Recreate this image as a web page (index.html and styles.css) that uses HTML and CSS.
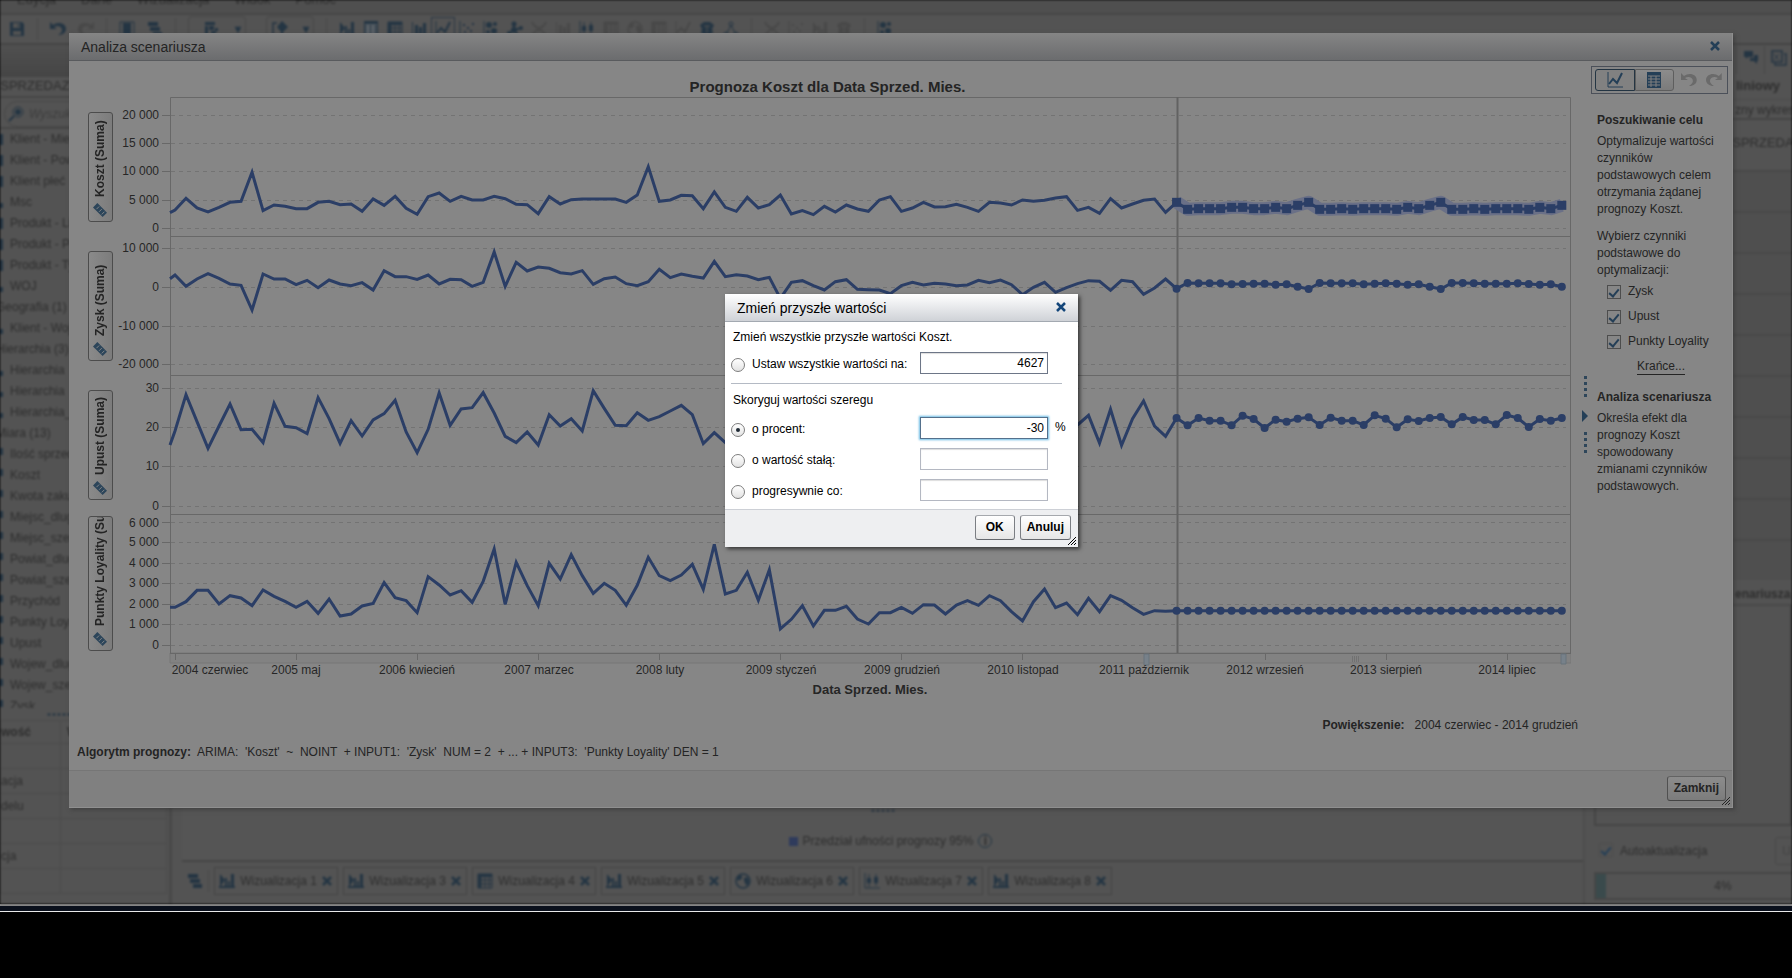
FILE: index.html
```html
<!DOCTYPE html>
<html lang="pl">
<head>
<meta charset="utf-8">
<title>Analiza scenariusza</title>
<link rel="stylesheet" href="styles.css">
</head>
<body>
<svg class="defs" aria-hidden="true">
  <defs>
    <symbol id="i-save" viewBox="0 0 16 16"><path d="M1 1h12l2 2v12H1z" fill="currentColor"/><path d="M4 2h7v5H4zM4 10h8v4H4z" fill="#525252"/><path d="M9 3h1v3H9z" fill="currentColor"/></symbol>
    <symbol id="i-undo" viewBox="0 0 16 14"><path d="M0 0v7h7L4 5c3-2 8-1 8 3 0 2-2 4-4 5h2c4-1 6-3 6-6 0-6-8-8-13-4z" fill="currentColor"/></symbol>
    <symbol id="i-redo" viewBox="0 0 16 14"><path d="M16 0v7H9l3-2C9 3 4 4 4 8c0 2 2 4 4 5H6C2 12 0 10 0 7 0 1 8-1 13 3z" fill="currentColor"/></symbol>
    <symbol id="i-stack" viewBox="0 0 16 16"><path d="M1 1h10v4H1zM3 6h10v4H3zM6 11h9v4H6z" fill="currentColor"/></symbol>
    <symbol id="i-page" viewBox="0 0 16 16"><path d="M1 1h14v15H1z" fill="none" stroke="currentColor"/><path d="M4 2h8v13H4z" fill="currentColor"/></symbol>
    <symbol id="i-auto" viewBox="0 0 16 16"><path d="M1 1l5 6-5 7zM6 5h2v10H6zM9 8h2v7H9zM12 1h3v14h-3z" fill="currentColor"/><path d="M0 14h16" stroke="currentColor" stroke-width="2"/></symbol>
    <symbol id="i-table" viewBox="0 0 16 16"><path d="M1 0h14v16H1z" fill="currentColor"/><path d="M2 4h12M2 7h12M2 10h12M2 13h12" stroke="#808080"/><path d="M5 4v11M10 4v11" stroke="#808080"/></symbol>
    <symbol id="i-cross" viewBox="0 0 16 16"><path d="M1 1h14v14H1zM1 3h14M4 2v13M8 3v12M12 3v12M1 7h14M1 11h14" fill="none" stroke="currentColor"/><path d="M1 1h14v3H1zM1 1h3v14H1z" fill="currentColor"/></symbol>
    <symbol id="i-bars" viewBox="0 0 16 16"><path d="M1 1h1v15H1zM4 4h3v11H4zM8 6h3v9H8zM12 2h3v13h-3z" fill="currentColor"/></symbol>
    <symbol id="i-line" viewBox="0 0 16 16"><path d="M1 0v15h15" fill="none" stroke="currentColor"/><path d="M2 12l4-5 4 4 5-10" fill="none" stroke="currentColor" stroke-width="2"/></symbol>
    <symbol id="i-scatter" viewBox="0 0 16 16"><path d="M1 0v15h15" fill="none" stroke="currentColor"/><path d="M4 3h2v2H4zM8 6h2v2H8zM13 2h2v2h-2zM5 10h2v2H5zM11 9h2v2h-2z" fill="currentColor"/></symbol>
    <symbol id="i-bubble" viewBox="0 0 16 16"><path d="M1 0v15h15" fill="none" stroke="currentColor"/><circle cx="6" cy="4" r="3" fill="currentColor"/><circle cx="12" cy="3" r="2" fill="currentColor"/><circle cx="11" cy="10" r="3" fill="currentColor"/><circle cx="5" cy="11" r="2" fill="currentColor"/></symbol>
    <symbol id="i-net" viewBox="0 0 16 16"><path d="M7 2v7M7 9l-5 4M7 9l7-2M7 9l4 5" stroke="currentColor" stroke-width="2"/><circle cx="7" cy="3" r="2.500" fill="currentColor"/><circle cx="7" cy="9" r="3" fill="currentColor"/><circle cx="2" cy="12" r="2" fill="currentColor"/><circle cx="14" cy="7" r="2" fill="currentColor"/></symbol>
    <symbol id="i-layout" viewBox="0 0 16 16"><path d="M2 1h10v3H2zM2 5h3v9H2zM6 5h5v4H6zM12 7h3v3h-3zM8 10h5v3H8z" fill="currentColor"/></symbol>
    <symbol id="i-insert" viewBox="0 0 16 16"><path d="M5 2H1v13h4" fill="none" stroke="currentColor" stroke-width="1.500"/><path d="M10 0l6 6-6 6-5-6z" fill="currentColor"/><path d="M9 10h2v5H9z" fill="currentColor"/></symbol>
    <symbol id="i-x" viewBox="0 0 16 16"><path d="M1 1c4 8 10 8 14 0M1 15c4-8 10-8 14 0" fill="none" stroke="currentColor" stroke-width="2"/></symbol>
    <symbol id="i-box" viewBox="0 0 16 16"><path d="M1 0v15h15" fill="none" stroke="currentColor"/><path d="M3 5h4v5H3zM10 4h4v6h-4z" fill="currentColor"/><path d="M5 1v13M12 1v12" stroke="currentColor"/></symbol>
    <symbol id="i-globe" viewBox="0 0 16 16"><circle cx="8" cy="8" r="7" fill="none" stroke="currentColor" stroke-width="1.500"/><path d="M3 3c3-2 5 0 4 2s-4 3-5 2zM9 5c3-2 5 0 5 3s-2 5-3 4-1-3-2-4z" fill="currentColor"/></symbol>
    <symbol id="i-shirt" viewBox="0 0 16 16"><path d="M1 4l4-3h6l4 3-2 4 1 4-6 4-6-4 1-4z" fill="currentColor"/><path d="M5 5h6M8 5v7" stroke="#525252"/></symbol>
    <symbol id="i-tree" viewBox="0 0 16 16"><path d="M8 4L3 14M8 4l5 10" stroke="currentColor"/><circle cx="8" cy="3" r="2" fill="none" stroke="currentColor"/><circle cx="3" cy="13" r="2" fill="none" stroke="currentColor"/><circle cx="13" cy="13" r="2" fill="none" stroke="currentColor"/></symbol>
    <symbol id="i-close" viewBox="0 0 10 10"><path d="M1 1l8 8M9 1L1 9" stroke="currentColor" stroke-width="2.500"/></symbol>
    <symbol id="i-ruler" viewBox="0 0 16 16"><path d="M5 0L0 5l11 11 5-5z" fill="currentColor"/><path d="M4 7l3-3M7 10l3-3M10 13l3-3" stroke="#8c8c8c"/></symbol>
    <symbol id="i-grip" viewBox="0 0 8 8"><path d="M0 8l8-8M3 8l5-5M6 8l2-2" stroke="currentColor"/></symbol>
    <symbol id="i-chat" viewBox="0 0 16 16"><path d="M1 1h9v6H5L3 9V7H1z" fill="currentColor"/><path d="M7 8h4V5h4v6h-1v3l-3-3H7z" fill="currentColor"/></symbol>
    <symbol id="i-copy" viewBox="0 0 16 16"><path d="M1 1h10v11H1zM13 4h2v11H4v-2" fill="none" stroke="currentColor" stroke-width="1.500"/><path d="M3 4l5 6M8 4l-5 6" stroke="currentColor"/></symbol>
    <symbol id="i-lens" viewBox="0 0 16 16"><circle cx="10" cy="6" r="5" fill="none" stroke="currentColor"/><circle cx="10" cy="6" r="3" fill="currentColor"/><path d="M6 10l-5 5" stroke="currentColor" stroke-width="2"/></symbol>
  </defs>
</svg>

<div class="app">
  <nav class="menu"><span>Edycja</span><span>Dane</span><span>Wizualizacja</span><span>Widok</span><span>Pomoc</span></nav>
  <div class="tools">
    <svg class="ic"><use href="#i-save"/></svg><i class="sep"></i>
    <svg class="ic"><use href="#i-undo"/></svg><svg class="ic off"><use href="#i-redo"/></svg><i class="sep"></i>
    <svg class="ic"><use href="#i-page"/></svg><svg class="ic"><use href="#i-stack"/></svg><i class="sep"></i>
    <span class="split"><svg class="ic"><use href="#i-layout"/></svg><b>▾</b></span>
    <span class="split narrow"><svg class="ic"><use href="#i-insert"/></svg><b>▾</b></span><i class="sep"></i>
    <span class="gallery">
      <svg class="ic"><use href="#i-auto"/></svg><svg class="ic"><use href="#i-table"/></svg><svg class="ic"><use href="#i-cross"/></svg><svg class="ic"><use href="#i-bars"/></svg><svg class="ic on"><use href="#i-line"/></svg><svg class="ic"><use href="#i-scatter"/></svg><svg class="ic"><use href="#i-bubble"/></svg><svg class="ic"><use href="#i-net"/></svg><svg class="ic off"><use href="#i-x"/></svg><svg class="ic off"><use href="#i-bars"/></svg><svg class="ic"><use href="#i-box"/></svg><svg class="ic off"><use href="#i-cross"/></svg><svg class="ic off"><use href="#i-globe"/></svg><svg class="ic off"><use href="#i-cross"/></svg><svg class="ic off"><use href="#i-line"/></svg><svg class="ic"><use href="#i-shirt"/></svg><svg class="ic"><use href="#i-tree"/></svg>
    </span><i class="sep"></i>
    <span class="gallery"><svg class="ic off"><use href="#i-x"/></svg><svg class="ic off"><use href="#i-scatter"/></svg><svg class="ic off"><use href="#i-auto"/></svg><svg class="ic off"><use href="#i-shirt"/></svg></span><i class="sep"></i>
    <svg class="ic"><use href="#i-bubble"/></svg>
  </div>
  <div class="work">
    <aside class="left">
      <div class="band"></div>
      <div class="source">_SPRZEDAZ</div>
      <div class="find"><div class="findbox"><svg class="ic"><use href="#i-lens"/></svg>Wyszukaj</div></div>
      <ul class="items">
        <li class="cat">Klient - Miejsc.</li><li class="cat">Klient - Powiat</li><li class="cat">Klient płeć</li><li class="geo">Msc</li><li class="cat">Produkt - Linia</li><li class="cat">Produkt - Prod.</li><li class="cat">Produkt - Typ</li><li class="geo">WOJ</li><li class="head">Geografia (1)</li><li class="geo">Klient - Woj.</li><li class="head">Hierarchia (3)</li><li class="geo">Hierarchia</li><li class="geo">Hierarchia</li><li class="geo">Hierarchia_</li><li class="head">Miara (13)</li><li class="num">Ilość sprzed.</li><li class="num">Koszt</li><li class="num">Kwota zakupu</li><li class="num">Miejsc_dlug</li><li class="num">Miejsc_szer</li><li class="num">Powiat_dlug</li><li class="num">Powiat_szer</li><li class="num">Przychód</li><li class="num">Punkty Loyality</li><li class="num">Upust</li><li class="num">Wojew_dlug</li><li class="num">Wojew_szer</li><li class="num">Zysk</li>
      </ul>
      <div class="hdots"></div>
      <table class="props">
        <tr><th>wość</th><th>Wartość</th></tr>
        <tr><td></td><td></td></tr>
        <tr><td>acja</td><td></td></tr>
        <tr><td>delu</td><td></td></tr>
        <tr><td></td><td></td></tr>
        <tr><td>cja</td><td></td></tr>
        <tr><td></td><td></td></tr>
      </table>
    </aside>
    <main class="center">
      <div class="canvas">
        <div class="cdots"></div>
        <div class="legend"><i class="key"></i>Przedział ufności prognozy 95%<span class="info">i</span></div>
      </div>
      <div class="tabs">
        <svg class="ic"><use href="#i-stack"/></svg><i class="sep"></i>
        <button class="tab"><svg class="ic"><use href="#i-auto"/></svg>Wizualizacja 1<svg class="x"><use href="#i-close"/></svg></button>
        <button class="tab"><svg class="ic"><use href="#i-auto"/></svg>Wizualizacja 3<svg class="x"><use href="#i-close"/></svg></button>
        <button class="tab"><svg class="ic"><use href="#i-cross"/></svg>Wizualizacja 4<svg class="x"><use href="#i-close"/></svg></button>
        <button class="tab"><svg class="ic"><use href="#i-auto"/></svg>Wizualizacja 5<svg class="x"><use href="#i-close"/></svg></button>
        <button class="tab"><svg class="ic"><use href="#i-globe"/></svg>Wizualizacja 6<svg class="x"><use href="#i-close"/></svg></button>
        <button class="tab"><svg class="ic"><use href="#i-box"/></svg>Wizualizacja 7<svg class="x"><use href="#i-close"/></svg></button>
        <button class="tab"><svg class="ic"><use href="#i-auto"/></svg>Wizualizacja 8<svg class="x"><use href="#i-close"/></svg></button>
      </div>
    </main>
    <aside class="right">
      <div class="rtabs"><span></span><span><svg class="ic"><use href="#i-chat"/></svg></span><span><svg class="ic"><use href="#i-copy"/></svg></span></div>
      <div class="rtitle">liniowy</div>
      <div class="rsub">zny wykres</div>
      <div class="rsrc">_SPRZEDAZ</div>
      <div class="rrows"><i></i><i></i><i></i><i></i><i></i><i></i><i></i><i></i><i></i><i></i></div>
      <div class="rtitle low">enariusza</div>
      <div class="rbox"></div>
      <div class="auto"><label><input type="checkbox" class="check" checked>Autoaktualizacja</label><button class="ubtn">Uaktualnij</button></div>
      <div class="meter"><i class="fill"></i><span>4%</span></div>
    </aside>
  </div>
</div>
<div class="taskline"></div>

<section class="dialog" aria-label="Analiza scenariusza">
  <header class="dhead"><span>Analiza scenariusza</span><button class="closer" aria-label="Zamknij okno"><svg><use href="#i-close"/></svg></button></header>
  <div class="dbody">
    <div class="chartcol">
      <h1 class="title">Prognoza Koszt dla Data Sprzed. Mies.</h1>
      <div class="chart">
        <div class="roles">
          <div class="slot"><button class="role"><svg><use href="#i-ruler"/></svg>Koszt (Suma)</button></div>
          <div class="slot"><button class="role"><svg><use href="#i-ruler"/></svg>Zysk (Suma)</button></div>
          <div class="slot"><button class="role"><svg><use href="#i-ruler"/></svg>Upust (Suma)</button></div>
          <div class="slot"><button class="role tall"><svg><use href="#i-ruler"/></svg>Punkty Loyality (Su</button></div>
        </div>
        <svg class="plot" viewBox="0 0 1458 608">
          <g class="grid" id="grid"></g>
          <path class="strip" d="M57 556H1458V566H57Z"/>
          <path class="frame" d="M57.500 556V.5H1457.500V556M57 139.500H1458M57 278.500H1458M57 417.500H1458M57 556.500H1458"/>
          <path class="frame" id="ticks" d=""/>
          <path class="now" d="M1064.500 0V556"/>
          <g id="series"></g>
          <path class="handle" d="M1031 557h5v11h-5zM1448 557h5v10h-5z"/>
          <path class="ribs" d="M1239.500 559v6M1241.500 559v6M1243.500 559v6M1245.500 559v6"/>
          <g class="ylab">
            <text x="46" y="22">20 000</text><text x="46" y="50">15 000</text><text x="46" y="78">10 000</text><text x="46" y="107">5 000</text><text x="46" y="135">0</text>
            <text x="46" y="155">10 000</text><text x="46" y="194">0</text><text x="46" y="233">-10 000</text><text x="46" y="271">-20 000</text>
            <text x="46" y="295">30</text><text x="46" y="334">20</text><text x="46" y="373">10</text><text x="46" y="413">0</text>
            <text x="46" y="430">6 000</text><text x="46" y="449">5 000</text><text x="46" y="470">4 000</text><text x="46" y="490">3 000</text><text x="46" y="511">2 000</text><text x="46" y="531">1 000</text><text x="46" y="552">0</text>
          </g>
          <g class="xlab">
            <text x="97" y="577">2004 czerwiec</text><text x="183" y="577">2005 maj</text><text x="304" y="577">2006 kwiecień</text><text x="426" y="577">2007 marzec</text><text x="547" y="577">2008 luty</text><text x="668" y="577">2009 styczeń</text><text x="789" y="577">2009 grudzień</text><text x="910" y="577">2010 listopad</text><text x="1031" y="577">2011 październik</text><text x="1152" y="577">2012 wrzesień</text><text x="1273" y="577">2013 sierpień</text><text x="1394" y="577">2014 lipiec</text>
            <text class="axis" x="757" y="597">Data Sprzed. Mies.</text>
          </g>
        </svg>
      </div>
      <p class="zoomrange"><b>Powiększenie:</b><span>2004 czerwiec - 2014 grudzień</span></p>
      <p class="algo"><b>Algorytm prognozy:</b><span>ARIMA:  'Koszt'  ~  NOINT  + INPUT1:  'Zysk'  NUM = 2  + ... + INPUT3:  'Punkty Loyality' DEN = 1</span></p>
    </div>
    <div class="splitter"><i class="vdots"></i><i class="arrow"></i><i class="vdots"></i></div>
    <aside class="side">
      <div class="modes">
        <button class="mode active" aria-label="Wykres"><svg><use href="#i-line"/></svg></button><button class="mode" aria-label="Tabela"><svg><use href="#i-table"/></svg></button>
        <svg class="hist"><use href="#i-undo"/></svg><svg class="hist"><use href="#i-redo"/></svg>
      </div>
      <div class="sidetext">
        <h2>Poszukiwanie celu</h2>
        <p>Optymalizuje wartości czynników podstawowych celem otrzymania żądanej prognozy Koszt.</p>
        <p class="pick">Wybierz czynniki podstawowe do optymalizacji:</p>
        <div class="checks">
          <label><input type="checkbox" class="check" checked>Zysk</label>
          <label><input type="checkbox" class="check" checked>Upust</label>
          <label><input type="checkbox" class="check" checked>Punkty Loyality</label>
        </div>
        <a class="limits" href="#">Krańce...</a>
        <h2>Analiza scenariusza</h2>
        <p>Określa efekt dla prognozy Koszt spowodowany zmianami czynników podstawowych.</p>
      </div>
    </aside>
  </div>
  <footer class="dfoot"><button class="btn dim">Zamknij</button><svg class="grip"><use href="#i-grip"/></svg></footer>
</section>

<form class="modal" aria-label="Zmień przyszłe wartości">
  <header class="mhead"><span>Zmień przyszłe wartości</span><button type="button" class="closer" aria-label="Zamknij"><svg><use href="#i-close"/></svg></button></header>
  <div class="mbody">
    <p>Zmień wszystkie przyszłe wartości Koszt.</p>
    <div class="row"><input type="radio" name="m" id="m1"><label for="m1">Ustaw wszystkie wartości na:</label><input class="val set" type="text" value="4627" aria-label="Wartość"></div>
    <hr>
    <p>Skoryguj wartości szeregu</p>
    <div class="row"><input type="radio" name="m" id="m2" checked><label for="m2">o procent:</label><input class="val set current" type="text" value="-30" aria-label="Procent"><span class="unit">%</span></div>
    <div class="row"><input type="radio" name="m" id="m3"><label for="m3">o wartość stałą:</label><input class="val" type="text" aria-label="Wartość stała"></div>
    <div class="row"><input type="radio" name="m" id="m4"><label for="m4">progresywnie co:</label><input class="val" type="text" aria-label="Przyrost"></div>
  </div>
  <footer class="mfoot"><button type="button" class="btn">OK</button><button type="button" class="btn">Anuluj</button><svg class="grip"><use href="#i-grip"/></svg></footer>
</form>
<script src="chart.js"></script>
</body>
</html>
```
FILE: styles.css
```css
* { box-sizing: border-box; }
body { margin: 0; background: #000; color: #242424; font: 12px/17px "Liberation Sans", Arial, sans-serif; overflow: hidden; }
h1, h2, p, ul { margin: 0; padding: 0; }
button, input { font: inherit; color: inherit; margin: 0; }
button { padding: 0; }
.defs { position: absolute; width: 0; height: 0; }

/* application behind the dialogs */
.app { height: 904px; display: flex; flex-direction: column; background: #535353; color: #2e2e2e; filter: blur(1px); overflow: hidden; }
.menu { display: flex; gap: 25px; height: 15px; padding-left: 17px; line-height: 0; font-size: 13px; background: #4f4f4f; border-bottom: 2px solid #464646; overflow: hidden; }
.tools { display: flex; align-items: center; height: 30px; padding-left: 9px; gap: 12px; color: #243543; border-bottom: 2px solid #444; flex: none; }
.ic { width: 16px; height: 16px; flex: none; }
.off { color: #484848; }
.on { outline: 1px solid #2b3844; outline-offset: 3px; }
.sep { width: 1px; height: 22px; background: #494949; }
.split { display: flex; align-items: center; justify-content: space-between; width: 58px; height: 26px; padding: 0 4px 0 14px; border: 1px solid #484848; border-radius: 4px; }
.split.narrow { width: 48px; margin-left: 8px; padding-left: 5px; }
.gallery { display: flex; gap: 8px; }
.work { display: flex; flex: 1; min-height: 0; }
.left { width: 172px; border-right: 3px solid #484848; display: flex; flex-direction: column; overflow: hidden; white-space: nowrap; }
.band { height: 32px; background: linear-gradient(#505050, #454545); flex: none; }
.source { height: 19px; line-height: 18px; margin-left: -7px; font-size: 13px; }
.find { height: 33px; padding: 3px 4px; border-top: 2px solid #464646; border-bottom: 2px solid #464646; flex: none; }
.findbox { display: flex; align-items: center; gap: 5px; height: 26px; padding-left: 3px; border: 1px solid #474747; border-radius: 13px; font-style: italic; color: #3e3e3e; }
.findbox .ic { color: #243543; }
.items { list-style: none; height: 579px; overflow: hidden; flex: none; }
.items li { height: 21px; line-height: 21px; padding-left: 10px; background: linear-gradient(#243543, #243543) left 5px / 3px 11px no-repeat; }
.items .geo { background-size: 3px 5px; background-position: left 11px; }
.items .num { background-size: 3px 7px; background-position: left 4px; }
.items .head { background: none; padding-left: 0; text-indent: -4px; }
.hdots, .cdots { height: 12px; background: radial-gradient(circle, #2b3844 1px, transparent 2px) center / 5px 5px repeat-x; width: 24px; margin-left: 47px; flex: none; }
.props { border-collapse: collapse; width: 167px; table-layout: fixed; }
.props td, .props th { height: 25px; padding: 0; border: 1px solid #4b4b4b; text-align: left; }
.props th { height: 23px; }
.props th:first-child { width: 60px; }
.props th + th { padding-left: 6px; }
.center { flex: 1; padding-left: 10px; display: flex; flex-direction: column; }
.canvas { flex: 1; display: flex; flex-direction: column; justify-content: flex-end; align-items: center; background: #555; border-bottom: 2px solid #454545; }
.cdots { margin: 0 0 10px; }
.legend { display: flex; align-items: center; gap: 5px; height: 30px; margin: 0 0 4px 16px; }
.key { width: 9px; height: 9px; background: #2f3b5c; }
.info { width: 14px; height: 14px; line-height: 12px; border: 1px solid #243543; border-radius: 50%; text-align: center; font-weight: bold; }
.tabs { display: flex; align-items: center; gap: 5px; height: 42px; padding: 0 0 4px 5px; color: #2e2e2e; }
.tabs .ic, .tabs .x { color: #243543; }
.tab { display: flex; align-items: center; justify-content: space-between; width: 124px; height: 28px; padding: 0 5px 0 4px; background: none; border: 1px solid #454545; }
.x { width: 10px; height: 10px; }
.right { width: 209px; padding: 1px 0 4px 9px; display: flex; flex-direction: column; border-left: 2px solid #4d4d4d; white-space: nowrap; overflow: hidden; }
.rtabs { display: flex; justify-content: flex-end; height: 28px; color: #243543; }
.rtabs span { width: 28px; padding: 4px 6px; border-left: 1px solid #464646; }
.rtitle { height: 26px; line-height: 24px; padding-left: 142px; font-size: 13px; font-weight: bold; border-bottom: 1px solid #4a4a4a; }
.rsub { height: 20px; padding: 2px 0 0 141px; border-bottom: 2px solid #444; }
.rsrc { height: 50px; line-height: 46px; padding-left: 131px; font-size: 13px; }
.rrows { height: 410px; display: flex; flex-direction: column; background: #4f4f4f; }
.rrows i { flex: 1; border-top: 2px solid #484848; }
.rtitle.low { line-height: 28px; padding-left: 141px; font-size: 12px; border-bottom: 2px solid #484848; }
.rbox { flex: 1; border: 2px solid #454545; border-top: 0; }
.auto { display: flex; align-items: center; justify-content: space-between; height: 46px; padding: 4px 0 0 5px; margin-right: -50px; }
.auto label { display: flex; gap: 7px; }
.ubtn { height: 28px; width: 67px; background: none; border: 1px solid #484848; border-radius: 3px; color: #444; }
.meter { display: flex; justify-content: center; position: relative; height: 28px; line-height: 24px; border: 2px solid #464646; margin-right: -60px; }
.fill { position: absolute; left: 0; top: 0; bottom: 0; width: 4%; background: #3a4a4c; }
.taskline { height: 8px; border-top: 2px solid #8a8a8a; border-bottom: 1px solid #e8e8e8; background: #0a101c; }

/* scenario dialog */
.dialog { position: absolute; left: 69px; right: 59px; top: 33px; background: #868686; border: solid #8f8f8f; border-width: 0 1px 1px 0; box-shadow: 2px 2px 4px #3338; display: flex; flex-direction: column; }
.dhead, .mhead { display: flex; align-items: center; justify-content: space-between; height: 28px; padding: 1px 12px 0; font-size: 14px; }
.dhead { background: linear-gradient(#858585, #6b6c6e); border-bottom: 1px solid #595b5e; }
.closer { border: 0; background: none; color: #243f57; width: 10px; height: 10px; display: flex; margin-bottom: 3px; }
.closer svg { width: 10px; height: 10px; }
.dbody { display: flex; height: 709px; }
.chartcol { flex: 1; min-width: 0; padding-top: 16px; }
.title { font-size: 15px; line-height: 20px; text-align: center; padding-left: 6px; }
.chart { display: flex; padding: 0 9px 0 19px; }
.roles { width: 25px; flex: none; }
.slot { height: 139px; display: flex; align-items: center; }
.role { width: 25px; height: 110px; border: 1px solid #4c4c4c; border-radius: 3px; background: linear-gradient(90deg, #7c7c7c, #8a8a8a); writing-mode: vertical-rl; transform: rotate(180deg); font-weight: bold; font-size: 12px; display: flex; align-items: center; gap: 6px; padding: 4px 0; overflow: hidden; white-space: nowrap; }
.role.tall { height: 135px; }
.role svg { width: 14px; height: 14px; color: #2c455a; transform: rotate(180deg); flex: none; }
.plot { flex: 1; min-width: 0; align-self: flex-start; }
.grid path { stroke: #737373; stroke-dasharray: 4 4; fill: none; }
.grid .tick, .frame { stroke: #686868; stroke-dasharray: none; fill: none; }
.strip { fill: #828282; stroke: #777; }
.now { stroke: #626262; stroke-width: 2; }
.trend { fill: none; stroke: #2b3e66; stroke-width: 3; }
.ci { fill: none; stroke: #6a7087; stroke-width: 13; stroke-linejoin: round; }
.mark { fill: #2b3e66; }
.handle { fill: #77818a; stroke: #69727a; }
.ribs { stroke: #717171; }
.ylab text { text-anchor: end; }
.xlab text { text-anchor: middle; }
.plot text { fill: #262626; font-size: 12px; }
.plot .axis { font-size: 13px; font-weight: bold; }
.zoomrange { display: flex; justify-content: flex-end; gap: 10px; padding: 12px 2px 0 0; }
.algo { display: flex; gap: 6px; padding: 10px 0 0 8px; }
.algo span { white-space: pre; }
.splitter { width: 11px; display: flex; flex-direction: column; align-items: center; justify-content: center; gap: 10px; padding-right: 1px; }
.vdots { width: 3px; height: 24px; background: repeating-linear-gradient(#2e465a 0 3px, transparent 3px 6px); }
.arrow { border: solid transparent; border-width: 6px 0 6px 6px; border-left-color: #243f57; }
.side { width: 141px; padding: 5px 4px 0 0; }
.modes { display: flex; align-items: center; height: 28px; padding: 0 5px 0 3px; border: 1px solid #4b5059; }
.mode { width: 40px; height: 22px; border: 1px solid #5e5e5e; background: linear-gradient(#8c8c8c, #7b7b7b); color: #243f57; display: flex; align-items: center; justify-content: center; border-radius: 0 3px 3px 0; }
.mode svg { width: 16px; height: 16px; }
.mode.active { border-color: #243543; border-radius: 3px 0 0 3px; background: #818181; }
.hist { width: 16px; height: 14px; margin-left: 7px; color: #6a6a6a; }
.hist + .hist { margin-left: 9px; }
.sidetext { padding: 18px 2px 0 6px; }
.sidetext h2 { font-size: 12px; line-height: 17px; padding-bottom: 4px; }
.pick { padding: 10px 24px 0 0; }
.checks label { display: flex; align-items: center; gap: 7px; height: 25px; padding-left: 10px; }
.check { appearance: none; width: 14px; height: 14px; border: 1px solid #4d4d4d; background: #868686; display: grid; place-items: center; }
.check:checked::before { content: ""; width: 4px; height: 8px; border: solid #243f57; border-width: 0 2px 2px 0; transform: rotate(40deg); }
.auto .check { background: none; }
.limits { display: block; width: 48px; margin: 5px 0 14px 40px; color: inherit; line-height: 15px; border-bottom: 1px solid #242424; text-decoration: none; }
.dfoot, .mfoot { display: flex; align-items: center; justify-content: flex-end; gap: 5px; height: 38px; padding: 0 7px 2px; position: relative; }
.dfoot { background: #808080; border-top: 1px solid #767676; height: 37px; padding-right: 6px; }
.btn { height: 25px; padding: 0 6px; font-weight: bold; border: 1px solid #6b6f76; border-color: #a5a8ad #7b7e83 #66696e; border-radius: 3px; background: linear-gradient(#fff, #e6e6e6); }
.btn.dim { border-color: #636363 #505050 #444; background: linear-gradient(#8c8c8c, #7c7c7c); }
.grip { position: absolute; right: 2px; bottom: 2px; width: 8px; height: 8px; }

/* value dialog */
.modal { position: absolute; left: calc(50% - 171px); top: 294px; width: 353px; background: #fff; color: #000; box-shadow: 2px 2px 4px #0009; }
.mhead { background: linear-gradient(#fff, #cfd2d7); border-bottom: 1px solid #a3a9b1; }
.mhead .closer { color: #14467a; }
.mbody { padding: 7px 16px 8px 6px; }
.mbody p { padding-left: 2px; }
.row { display: flex; align-items: center; height: 22px; margin-bottom: 9px; }
.row > * { flex: none; }
.mbody p + .row { margin-top: 6px; }
.mbody hr { border: 0; border-top: 1px solid #b4bac4; margin: 0 0 8px; }
.mbody hr + p + .row { margin-top: 8px; }
.row:last-child { margin-bottom: 0; }
.row label { width: 168px; padding-top: 2px; }
.row [type=radio] { appearance: none; width: 14px; height: 14px; margin: 3px 7px 0 0; border: 1px solid #7d7d7d; border-radius: 50%; background: linear-gradient(#fff, #e3e3e3); display: grid; place-items: center; }
.row [type=radio]:checked::before { content: ""; width: 4px; height: 4px; border-radius: 50%; background: #1f2a35; }
.val { width: 128px; height: 22px; padding: 0 3px; border: 1px solid #b4b8c2; background: #fff; text-align: right; outline: 0; box-shadow: inset 0 1px 1px #ddd; border-radius: 0; }
.val.set { border-color: #6d7687; }
.val.current { border-color: #54708c; box-shadow: 0 0 2px 1px #6cbbe4; }
.unit { padding: 0 0 2px 7px; }
.mfoot { background: #eeeff1; border-top: 1px solid #cdd0d6; }
.mfoot .btn:first-child { padding: 0 10px; }
```
FILE: chart.js
```js
const NS = "http://www.w3.org/2000/svg";
const STEP = 1386.8 / 126;   // one month
const ORIGIN = 62;           // June 2004
const FORECAST = 91;         // first forecast month
const TOP = 291;             // samples and rules are in thirds of a unit, counted from here

const rules = [346, 430, 514, 601, 685, 745, 862, 979, 1093, 1165, 1282, 1399, 1519, 1567, 1627, 1690, 1750, 1813, 1873, 1936];

const koszt = [638, 630, 595, 624, 636, 622, 607, 604, 517, 632, 615, 619, 626, 626, 607, 604, 614, 612, 634, 597, 616, 589, 625, 643, 590, 579, 604, 589, 600, 600, 589, 596, 613, 614, 641, 590, 612, 599, 597, 597, 597, 597, 607, 585, 500, 604, 600, 586, 587, 626, 576, 622, 634, 592, 624, 614, 585, 642, 632, 644, 619, 636, 615, 627, 634, 600, 590, 634, 624, 607, 621, 620, 613, 622, 634, 607, 609, 615, 600, 604, 601, 594, 590, 631, 622, 640, 596, 624, 612, 601, 597, 637,
  607, 628, 626, 626, 626, 622, 622, 626, 626, 622, 626, 616, 607, 628, 628, 626, 628, 626, 626, 626, 628, 622, 626, 616, 607, 628, 628, 626, 628, 626, 626, 626, 628, 622, 626, 616];
const zysk = [836, 825, 859, 837, 821, 835, 852, 856, 930, 822, 837, 837, 854, 841, 863, 840, 852, 857, 848, 870, 812, 830, 830, 838, 825, 852, 838, 839, 859, 847, 756, 859, 787, 813, 801, 805, 818, 822, 812, 853, 836, 831, 851, 857, 845, 808, 833, 822, 829, 834, 784, 830, 824, 828, 839, 832, 895, 847, 842, 857, 870, 845, 839, 868, 869, 870, 881, 857, 847, 855, 850, 852, 857, 855, 841, 848, 840, 854, 884, 862, 847, 877, 863, 851, 842, 844, 871, 841, 845, 883, 864, 837,
  866, 849, 850, 850, 850, 853, 852, 851, 851, 854, 853, 860, 867, 849, 850, 850, 850, 853, 851, 850, 851, 854, 853, 860, 867, 849, 849, 850, 851, 851, 851, 850, 852, 854, 853, 860];
const upust = [345, 303, 194, 275, 355, 288, 222, 299, 298, 338, 220, 289, 293, 311, 203, 266, 340, 272, 318, 270, 251, 211, 306, 368, 298, 189, 286, 237, 233, 188, 249, 319, 338, 306, 345, 254, 288, 266, 303, 182, 235, 286, 287, 248, 271, 260, 243, 226, 254, 341, 308, 338, 300, 340, 280, 250, 310, 330, 260, 290, 240, 300, 330, 270, 240, 300, 320, 260, 290, 330, 250, 300, 320, 280, 240, 300, 320, 270, 300, 330, 260, 290, 310, 285, 256, 339, 238, 346, 266, 213, 288, 319,
  264, 286, 264, 272, 272, 286, 257, 267, 294, 269, 275, 266, 262, 285, 263, 272, 272, 285, 256, 266, 292, 268, 273, 264, 261, 283, 261, 270, 270, 283, 255, 264, 291, 267, 272, 264].map(v => v + 990);
const punkty = [832, 832, 815, 781, 781, 822, 797, 804, 827, 780, 799, 814, 832, 814, 850, 807, 858, 852, 828, 820, 758, 803, 812, 848, 740, 765, 795, 782, 817, 754, 657, 823, 697, 767, 827, 700, 747, 674, 737, 790, 760, 781, 826, 766, 682, 737, 752, 735, 703, 778, 643, 792, 781, 727, 811, 719, 897, 868, 827, 888, 841, 841, 829, 867, 882, 848, 848, 832, 850, 824, 825, 852, 825, 812, 826, 797, 812, 845, 873, 815, 777, 833, 819, 854, 805, 845, 797, 811, 833, 853, 842, 844].concat(Array(36).fill(842)).map(v => v + 990);

const add = (parent, name, attrs) => {
  const el = document.createElementNS(NS, name);
  for (const k in attrs) el.setAttribute(k, attrs[k]);
  parent.appendChild(el);
};
const y = v => (v - TOP) / 3;

const grid = document.getElementById("grid");
for (const r of rules) {
  const gy = Math.floor(y(r)) + 0.5;
  add(grid, "path", { d: `M58 ${gy}H1453` });
  add(grid, "path", { class: "tick", d: `M49 ${gy}H57` });
}
let ticks = "";
for (let k = 0; k < 12; k++) ticks += `M${Math.round(ORIGIN + k * 11 * STEP) + 0.5} 557v6`;
document.getElementById("ticks").setAttribute("d", ticks);

const layer = document.getElementById("series");
for (const data of [koszt, zysk, upust, punkty]) {
  // the first sample lies on the left frame, half a month before the origin
  const pts = data.map((v, i) => [i ? ORIGIN + (i - 1) * STEP : 57, y(v)]);
  const future = pts.slice(FORECAST + 1);
  if (data === koszt) add(layer, "polyline", { class: "ci", points: future.join(" ") });
  add(layer, "polyline", { class: "trend", points: pts.join(" ") });
  for (const [px, py] of future) {
    if (data === koszt) add(layer, "rect", { class: "mark", x: px - 4.5, y: py - 4.5, width: 9, height: 9 });
    else add(layer, "circle", { class: "mark", cx: px, cy: py, r: 4 });
  }
}
```
